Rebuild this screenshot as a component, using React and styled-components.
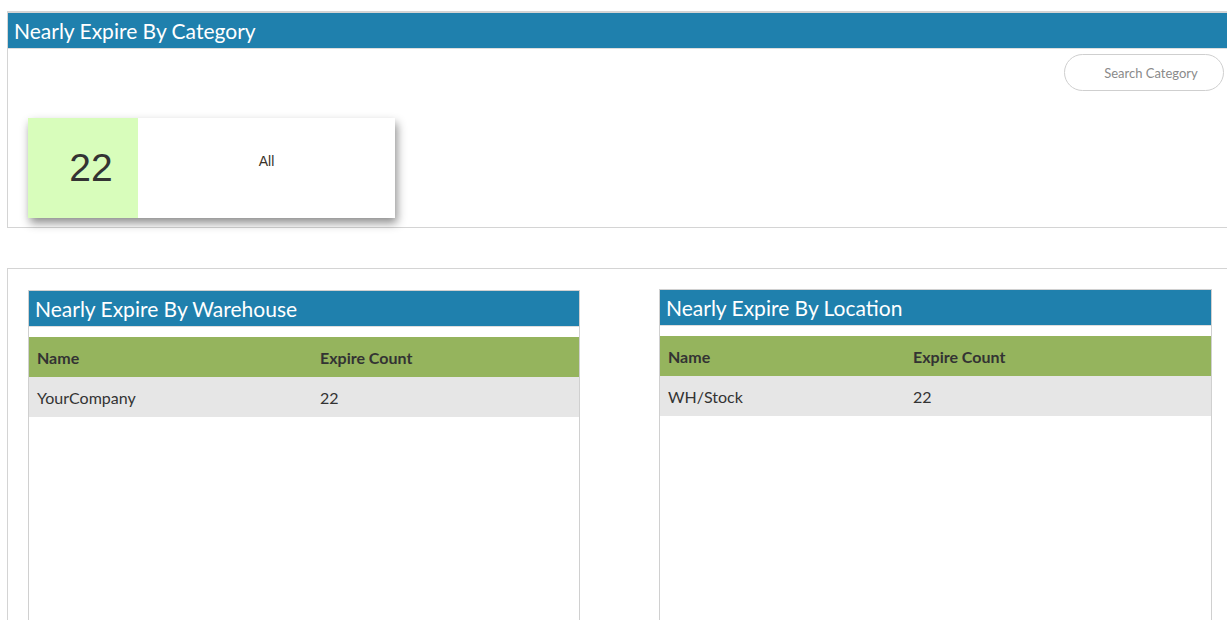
import styled, { createGlobalStyle } from "styled-components";

const GlobalStyle = createGlobalStyle`
  html, body {
    margin: 0;
    padding: 0;
    background: #fff;
    overflow: hidden;
  }
  body {
    font-family: Lato, "Liberation Sans", Arial, sans-serif;
    color: #333;
  }
`;

const Page = styled.div`
  width: 1233px;
  padding: 11px 0 0 7px;
  display: flex;
  flex-direction: column;
  gap: 40px;
`;

const Panel = styled.section`
  border: 1px solid #d4d4d4;
  border-top-width: ${(p) => (p.$thickTop ? "2px" : "1px")};
  background: #fff;
`;

const Heading = styled.h2`
  margin: 0;
  height: 35px;
  line-height: 35px;
  padding-left: 6px;
  background: #1f80ad;
  color: #fff;
  font-family: Lato, sans-serif;
  font-weight: 400;
  font-size: 21px;
  border-bottom: 1px solid #ddd;
`;

const Toolbar = styled.div`
  display: flex;
  justify-content: flex-end;
  padding: 5px 15px 0 0;
`;

const SearchInput = styled.input`
  width: 160px;
  height: 37px;
  box-sizing: border-box;
  border: 1px solid #cfcfcf;
  border-radius: 19px;
  padding: 0 8px 0 22px;
  font-family: Lato, sans-serif;
  font-size: 13px;
  text-align: center;
  outline: none;
  &::placeholder {
    color: #8a8a8a;
  }
`;

const CardArea = styled.div`
  display: flex;
  padding: 27px 0 9px 20px;
`;

const CountCard = styled.div`
  display: flex;
  width: 367px;
  height: 100px;
  background: #fff;
  box-shadow: 2px 5px 9px rgba(0, 0, 0, 0.45);
`;

const CountBox = styled.div`
  width: 110px;
  background: #d8fdbb;
  display: flex;
  align-items: center;
  justify-content: center;
  padding-left: 16px;
  box-sizing: border-box;
  font-family: "Liberation Sans", Arial, sans-serif;
  font-size: 39px;
  color: #333;
`;

const CountLabel = styled.div`
  flex: 1;
  text-align: center;
  padding-top: 35px;
  font-family: "Liberation Sans", Arial, sans-serif;
  font-size: 14px;
  color: #3a3228;
`;

const SplitBody = styled.div`
  display: grid;
  grid-template-columns: 552px 553px;
  column-gap: 79px;
  padding: 21px 0 0 20px;
  height: 340px;
  align-items: start;
`;

const SubPanel = styled.div`
  border: 1px solid #d0d0d0;
  min-height: 360px;
  margin-top: ${(p) => p.$offset || 0}px;
`;

const SubHeading = styled(Heading)`
  margin-bottom: 10px;
`;

const Table = styled.table`
  width: 100%;
  border-collapse: collapse;
  font-family: Lato, sans-serif;
  font-size: 16px;
  color: #333;
`;

const HeadCell = styled.th`
  height: 40px;
  padding: 0 8px;
  text-align: left;
  font-weight: 700;
  background: #95b45d;
  width: ${(p) => p.$width || "auto"};
`;

const Cell = styled.td`
  height: 40px;
  padding: 0 8px;
  background: #e6e6e6;
`;

const ExpireTable = ({ title, rows, firstCol, offset }) => (
  <SubPanel $offset={offset}>
    <SubHeading as="h3">{title}</SubHeading>
    <Table>
      <thead>
        <tr>
          <HeadCell $width={firstCol}>Name</HeadCell>
          <HeadCell>Expire Count</HeadCell>
        </tr>
      </thead>
      <tbody>
        {rows.map((r) => (
          <tr key={r.name}>
            <Cell>{r.name}</Cell>
            <Cell>{r.count}</Cell>
          </tr>
        ))}
      </tbody>
    </Table>
  </SubPanel>
);

export default function App() {
  return (
    <>
      <GlobalStyle />
      <Page>
        <Panel $thickTop>
          <Heading>Nearly Expire By Category</Heading>
          <Toolbar>
            <SearchInput placeholder="Search Category" />
          </Toolbar>
          <CardArea>
            <CountCard>
              <CountBox>22</CountBox>
              <CountLabel>All</CountLabel>
            </CountCard>
          </CardArea>
        </Panel>
        <Panel>
          <SplitBody>
            <ExpireTable
              title="Nearly Expire By Warehouse"
              rows={[{ name: "YourCompany", count: 22 }]}
              firstCol="267px"
            />
            <ExpireTable
              title="Nearly Expire By Location"
              rows={[{ name: "WH/Stock", count: 22 }]}
              firstCol="229px"
              offset={-1}
            />
          </SplitBody>
        </Panel>
      </Page>
    </>
  );
}
